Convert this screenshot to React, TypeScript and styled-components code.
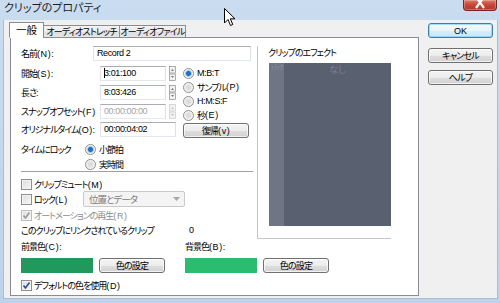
import React from 'react';
import styled, { createGlobalStyle } from 'styled-components';

const Global = createGlobalStyle`
  html, body { margin: 0; padding: 0; width: 500px; height: 303px; overflow: hidden; }
  body {
    font-family: "Liberation Sans", "Noto Sans CJK JP", sans-serif;
    font-size: 9px;
    letter-spacing: -1px;
    color: #000;
    font-feature-settings: "palt";
  }
  * { box-sizing: border-box; }
`;

const Window = styled.div`
  position: relative;
  width: 500px;
  height: 303px;
  background: linear-gradient(180deg, #c9dcf0 0%, #bcd3eb 100%);
  display: flex;
  flex-direction: column;
  padding: 0 2px 4px 3px;
`;

const TitleBar = styled.div`
  height: 20px;
  display: flex;
  align-items: flex-start;
`;

const TitleText = styled.div`
  font-size: 11px;
  letter-spacing: 0;
  line-height: 16px;
  padding: 0 0 0 1px;
  color: #1e1e1e;
`;

const CloseButton = styled.div`
  margin-left: auto;
  margin-right: 1px;
  width: 34px;
  height: 11px;
  border: 1px solid #6e2a22;
  border-top: none;
  border-radius: 0 0 4px 4px;
  background: linear-gradient(180deg, #d9806f 0%, #c9483a 45%, #b53326 100%);
  box-shadow: inset 0 0 0 1px rgba(255, 210, 200, 0.35);
  display: flex;
  justify-content: center;
  overflow: hidden;
`;

const Client = styled.div`
  flex: 1;
  background: #f0f0f0;
  display: flex;
  padding: 2px 0 2px 5px;
  border: 1px solid #a9bdd3;
  border-top: none;
`;

const TabArea = styled.div`
  width: 410px;
  display: flex;
  flex-direction: column;
`;

const TabRow = styled.div`
  display: flex;
  align-items: flex-end;
  height: 16px;
  position: relative;
  z-index: 1;
  margin-bottom: -1px;
`;

const Tab = styled.div<{ $active?: boolean; $w: number }>`
  width: ${p => p.$w}px;
  height: ${p => (p.$active ? 16 : 13)}px;
  border: 1px solid #898c95;
  border-bottom: ${p => (p.$active ? '1px solid #fff' : '1px solid #898c95')};
  margin-left: ${p => (p.$active ? 0 : -1)}px;
  background: ${p => (p.$active ? '#fff' : 'linear-gradient(180deg, #f3f3f3 0%, #ebebeb 50%, #dedede 51%, #e6e6e6 100%)')};
  display: flex;
  align-items: center;
  justify-content: center;
  line-height: 12px;
  white-space: nowrap;
  font-size: ${p => (p.$active ? 10.5 : 9)}px;
  letter-spacing: ${p => (p.$active ? 0 : -0.8)}px;
  &:first-child { margin-left: 0; }
`;

const Panel = styled.div`
  flex: 1;
  margin-left: 1px;
  background: #fff;
  border: 1px solid #898c95;
  padding: 8px 0 0 10px;
  display: flex;
  flex-direction: column;
`;

const TopRow = styled.div`
  display: flex;
`;

const LeftCol = styled.div`
  width: 236px;
  display: flex;
  flex-direction: column;
`;

const Row = styled.div<{ $h?: number; $mt?: number }>`
  display: flex;
  align-items: center;
  height: ${p => p.$h ?? 15}px;
  margin-top: ${p => p.$mt ?? 0}px;
`;

const Label = styled.div<{ $w?: number }>`
  width: ${p => p.$w ?? 79}px;
  flex-shrink: 0;
  white-space: nowrap;
`;

const Mn = styled.span<{ $ls?: number }>`
  letter-spacing: ${p => p.$ls ?? 0.6}px;
`;

const TextBox = styled.div<{ $w: number; $disabled?: boolean }>`
  width: ${p => p.$w}px;
  height: 15px;
  border: 1px solid #abadb3;
  border-color: #abadb3 #dbdfe6 #e3e9ef #e2e3ea;
  background: #fff;
  padding: 0 3px;
  line-height: 13px;
  font-size: 9px;
  letter-spacing: -0.4px;
  color: ${p => (p.$disabled ? '#a3a3a3' : '#000')};
  white-space: nowrap;
  overflow: hidden;
`;

const Caret = styled.span`
  border-left: 1px solid #000;
  margin-right: -1px;
`;

const SpinWrap = styled.div`
  margin-left: 3px;
  width: 7px;
  height: 15px;
`;

const UpperArea = styled.div`
  display: flex;
  margin-top: 5px;
`;

const FieldsCol = styled.div`
  display: flex;
  flex-direction: column;
  width: 155px;
`;

const RadioCol = styled.div`
  display: flex;
  flex-direction: column;
  margin-left: 7px;
`;

const RadioRow = styled.div<{ $h?: number }>`
  display: flex;
  align-items: center;
  height: ${p => p.$h ?? 14}px;
  white-space: nowrap;
`;

const RadioCircle = styled.span<{ $on?: boolean }>`
  width: 11px;
  height: 11px;
  border-radius: 50%;
  border: 1px solid #8e8f8f;
  background: ${p =>
    p.$on
      ? 'radial-gradient(circle, #1e6fc2 0 2px, #5aa3e0 2.5px, #d9ecfb 3.5px, #f4f4f4 4px)'
      : 'radial-gradient(circle, #dcdcdc 0 2px, #eaeaea 3px, #f6f6f6 4.5px)'};
  margin-right: 3px;
  flex-shrink: 0;
`;

const Button = styled.div<{ $w?: number; $default?: boolean; $mt?: number }>`
  width: ${p => (p.$w ? `${p.$w}px` : '100%')};
  height: 15px;
  margin-top: ${p => p.$mt ?? 0}px;
  border: 1px solid ${p => (p.$default ? '#3c7fb1' : '#707070')};
  border-radius: 3px;
  background: ${p =>
    p.$default
      ? 'linear-gradient(180deg, #f4fafd 0%, #e8f4fb 50%, #d9eef9 51%, #cbe7f6 100%)'
      : 'linear-gradient(180deg, #f4f4f4 0%, #ececec 50%, #dedede 51%, #d2d2d2 100%)'};
  box-shadow: inset 0 0 0 1px ${p => (p.$default ? 'rgba(110,200,240,0.6)' : 'rgba(255,255,255,0.7)')};
  display: flex;
  align-items: center;
  justify-content: center;
  line-height: 12px;
  white-space: nowrap;
  letter-spacing: ${p => (p.$default ? 0 : -0.8)}px;
`;

const LockTime = styled.div`
  display: flex;
  margin-top: 5px;
`;

const LockRadios = styled.div`
  display: flex;
  flex-direction: column;
  gap: 2px;
  margin-left: -15px;
`;

const Separator = styled.div`
  height: 1px;
  width: 232px;
  background: #a0a0a0;
`;

const CheckBox = styled.span<{ $disabled?: boolean }>`
  width: 11px;
  height: 11px;
  border: 1px solid ${p => (p.$disabled ? '#bcbcbc' : '#8e8f8f')};
  background: linear-gradient(135deg, #dcdcdc 0%, #f7f7f7 100%);
  box-shadow: inset 0 0 0 1px #f4f4f4;
  margin-right: 2px;
  flex-shrink: 0;
  display: flex;
  align-items: center;
  justify-content: center;
`;

const CheckText = styled.span<{ $disabled?: boolean; $w?: number }>`
  color: ${p => (p.$disabled ? '#8d8d8d' : '#000')};
  white-space: nowrap;
  ${p => (p.$w ? `width: ${p.$w}px; flex-shrink: 0;` : '')}
`;

const Combo = styled.div`
  width: 102px;
  height: 16px;
  border: 1px solid #c9c9c9;
  border-radius: 2px;
  background: #f4f4f4;
  color: #7a7a7a;
  display: flex;
  align-items: center;
  padding: 0 4px 0 5px;
  justify-content: space-between;
  font-size: 9.5px;
`;

const EffectGroup = styled.div`
  width: 134px;
  height: 193px;
  border-left: 1px solid #c6c6c6;
  border-bottom: 1px solid #c6c6c6;
  padding-left: 10px;
  display: flex;
  flex-direction: column;
`;

const EffectLabel = styled.div`
  height: 14px;
  line-height: 14px;
  white-space: nowrap;
`;

const EffectBox = styled.div`
  margin-top: 3px;
  margin-left: 1px;
  width: 122px;
  height: 163px;
  background: #596070;
  display: flex;
`;

const EffectStrip = styled.div`
  width: 15px;
  background: #6f7585;
  color: #8e94a3;
  font-size: 6px;
  letter-spacing: 0;
  line-height: 7px;
  padding: 1px 0 0 2px;
  white-space: nowrap;
  overflow: hidden;
`;

const EffectNone = styled.div`
  flex: 1;
  text-align: center;
  color: #7d8494;
  font-size: 9px;
  letter-spacing: 0;
  line-height: 12px;
  padding-top: 1px;
`;

const ColorSection = styled.div`
  display: flex;
  gap: 20px;
  margin-top: 1px;
`;

const ColorGroup = styled.div`
  display: flex;
  flex-direction: column;
`;

const ColorLabel = styled.div`
  height: 14px;
  line-height: 14px;
  margin-bottom: 4px;
`;

const ColorLine = styled.div`
  display: flex;
  gap: 6px;
  align-items: center;
`;

const Swatch = styled.div<{ $c: string }>`
  width: 72px;
  height: 15px;
  background: ${p => p.$c};
`;

const ButtonCol = styled.div`
  width: 65px;
  margin-left: 9px;
  display: flex;
  flex-direction: column;
  padding-top: 1px;
`;

const CursorLayer = styled.svg`
  position: absolute;
  left: 224px;
  top: 8px;
`;

const Spinner: React.FC<{ disabled?: boolean }> = ({ disabled }) => {
  const c = disabled ? '#c4c4c4' : '#7b7b7b';
  return (
    <SpinWrap>
      <svg width="7" height="15" viewBox="0 0 7 15">
        <rect x="0.5" y="0.5" width="6" height="6.5" fill="#f2f2f2" stroke={c} strokeWidth="0.6" />
        <rect x="0.5" y="8" width="6" height="6.5" fill="#f2f2f2" stroke={c} strokeWidth="0.6" />
        <path d="M2 5 L3.5 3 L5 5 Z" fill={c} />
        <path d="M2 10 L3.5 12 L5 10 Z" fill={c} />
      </svg>
    </SpinWrap>
  );
};

const Check: React.FC<{ on?: boolean; disabled?: boolean }> = ({ on, disabled }) => (
  <CheckBox $disabled={disabled}>
    {on && (
      <svg width="9" height="9" viewBox="0 0 9 9">
        <path d="M1.5 4.5 L3.5 7 L7.5 1.5" fill="none" stroke={disabled ? '#9a9a9a' : '#2a4f95'} strokeWidth="1.6" />
      </svg>
    )}
  </CheckBox>
);

export default function App() {
  return (
    <>
      <Global />
      <Window>
        <TitleBar>
          <TitleText>クリップのプロパティ</TitleText>
          <CloseButton>
            <svg width="12" height="9" viewBox="0 0 12 9">
              <path d="M2 -3 L10 8 M10 -3 L2 8" stroke="#fff" strokeWidth="2.2" />
            </svg>
          </CloseButton>
        </TitleBar>
        <Client>
          <TabArea>
            <TabRow>
              <Tab $active $w={35}>一般</Tab>
              <Tab $w={77}>オーディオストレッチ</Tab>
              <Tab $w={67}>オーディオファイル</Tab>
            </TabRow>
            <Panel>
              <TopRow>
                <LeftCol>
                  <Row>
                    <Label $w={72}>名前<Mn>(N):</Mn></Label>
                    <TextBox $w={158}>Record 2</TextBox>
                  </Row>
                  <UpperArea>
                    <FieldsCol>
                      <Row>
                        <Label>開始<Mn>(S):</Mn></Label>
                        <TextBox $w={66}><Caret />3:01:100</TextBox>
                        <Spinner />
                      </Row>
                      <Row $mt={4}>
                        <Label>長さ:</Label>
                        <TextBox $w={66}>8:03:426</TextBox>
                        <Spinner />
                      </Row>
                      <Row $mt={4}>
                        <Label>スナップオフセット<Mn>(F)</Mn></Label>
                        <TextBox $w={66} $disabled>00:00:00:00</TextBox>
                        <Spinner disabled />
                      </Row>
                      <Row $mt={3}>
                        <Label>オリジナルタイム<Mn $ls={0.3}>(O):</Mn></Label>
                        <TextBox $w={76}>00:00:04:02</TextBox>
                      </Row>
                    </FieldsCol>
                    <RadioCol>
                      <RadioRow><RadioCircle $on /><Mn $ls={-0.4}>M:B:T</Mn></RadioRow>
                      <RadioRow><RadioCircle />サンプル<Mn>(P)</Mn></RadioRow>
                      <RadioRow><RadioCircle /><Mn $ls={-0.4}>H:M:S:F</Mn></RadioRow>
                      <RadioRow><RadioCircle />秒<Mn>(E)</Mn></RadioRow>
                      <Button $w={66} $mt={1}>復帰<Mn>(v)</Mn></Button>
                    </RadioCol>
                  </UpperArea>
                  <LockTime>
                    <Label $w={79}>タイムにロック</Label>
                    <LockRadios>
                      <RadioRow $h={13}><RadioCircle $on />小節拍</RadioRow>
                      <RadioRow $h={13}><RadioCircle />実時間</RadioRow>
                    </LockRadios>
                  </LockTime>
                  <Separator />
                  <Row $h={12} $mt={6}>
                    <Check />
                    <CheckText>クリップミュート<Mn>(M)</Mn></CheckText>
                  </Row>
                  <Row $h={16} $mt={1}>
                    <Check />
                    <CheckText $w={49}>ロック<Mn>(L)</Mn></CheckText>
                    <Combo>
                      <span>位置とデータ</span>
                      <svg width="7" height="4" viewBox="0 0 7 4"><path d="M0 0 L7 0 L3.5 4 Z" fill="#a8a8a8" /></svg>
                    </Combo>
                  </Row>
                  <Row $h={14} $mt={1}>
                    <Check on disabled />
                    <CheckText $disabled>オートメーションの再生<Mn>(R)</Mn></CheckText>
                  </Row>
                  <Row $h={14} $mt={1}>
                    <Label $w={168}>このクリップにリンクされているクリップ</Label>
                    <span>0</span>
                  </Row>
                </LeftCol>
                <EffectGroup>
                  <EffectLabel>クリップのエフェクト</EffectLabel>
                  <EffectBox>
                    <EffectStrip>ﾄﾗｯｸ</EffectStrip>
                    <EffectNone>なし</EffectNone>
                  </EffectBox>
                </EffectGroup>
              </TopRow>
              <ColorSection>
                <ColorGroup>
                  <ColorLabel>前景色<Mn>(C):</Mn></ColorLabel>
                  <ColorLine>
                    <Swatch $c="#21995c" />
                    <Button $w={66}>色の設定</Button>
                  </ColorLine>
                </ColorGroup>
                <ColorGroup>
                  <ColorLabel>背景色<Mn>(B):</Mn></ColorLabel>
                  <ColorLine>
                    <Swatch $c="#2cbc6f" />
                    <Button $w={66}>色の設定</Button>
                  </ColorLine>
                </ColorGroup>
              </ColorSection>
              <Row $h={14} $mt={5}>
                <Check on />
                <CheckText>デフォルトの色を使用<Mn>(D)</Mn></CheckText>
              </Row>
            </Panel>
          </TabArea>
          <ButtonCol>
            <Button $default>OK</Button>
            <Button $mt={10}>キャンセル</Button>
            <Button $mt={7}>ヘルプ</Button>
          </ButtonCol>
        </Client>
        <CursorLayer width="13" height="19" viewBox="0 0 13 19">
          <path d="M0.5 0.5 L0.5 15 L4 11.5 L6.5 17.5 L8.8 16.5 L6.3 10.8 L11 10.8 Z" fill="#fff" stroke="#000" strokeWidth="1" />
        </CursorLayer>
      </Window>
    </>
  );
}
